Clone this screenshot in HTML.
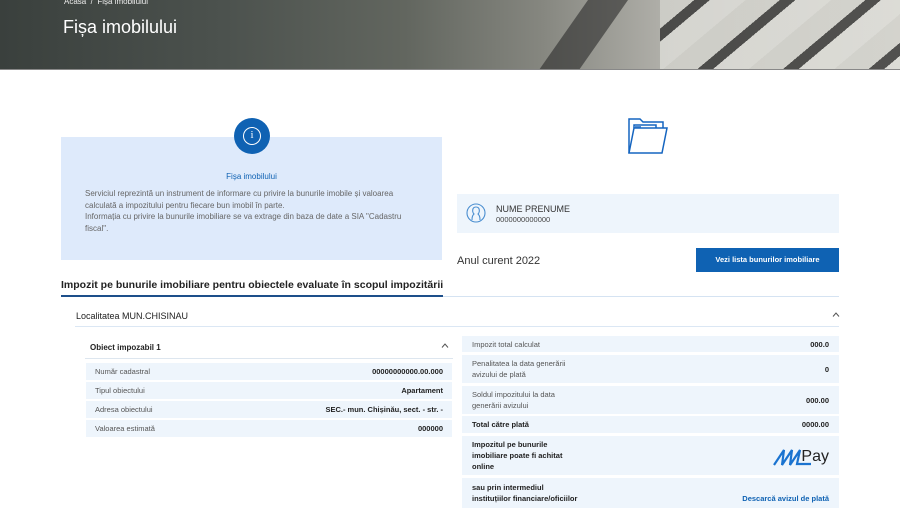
<!DOCTYPE html>
<html><head><meta charset="utf-8"><style>
*{margin:0;padding:0;box-sizing:border-box}
body{width:900px;height:505px;overflow:hidden;background:#fff;font-family:"Liberation Sans",sans-serif;position:relative;color:#222}
.a{position:absolute}
.hero{left:0;top:0;width:900px;height:70px;background:linear-gradient(90deg,#3a403d 0%,#4c524e 25%,#62665f 45%,#85867f 60%,#b4b3ad 75%,#c9c8c2 100%);overflow:hidden;border-bottom:1px solid #888}
.row{position:absolute;background:#eef5fc;font-size:7.5px;color:#555;display:flex;align-items:center;justify-content:space-between;padding:0 6px}
.row b{color:#222}
</style></head><body>
<div class="a hero">
 <div class="a" style="left:560px;top:-20px;width:40px;height:120px;background:#2a2a2a;transform:skewX(-35deg);opacity:.6"></div>
 <div class="a" style="left:660px;top:0;width:240px;height:70px;background:repeating-linear-gradient(140deg,#d8d8d2 0 22px,#1e1e1e 22px 32px,#e4e4df 32px 55px);opacity:.7"></div>
 <div class="a" style="left:64px;top:-3px;color:#eee;font-size:8px">Acasă &nbsp;/&nbsp; Fișa imobilului</div>
 <div class="a" style="left:63px;top:17px;color:#fff;font-size:18px">Fișa imobilului</div>
</div>
<div class="a" style="left:61px;top:137px;width:381px;height:123px;background:#deeafb"></div>
<div class="a" style="left:234px;top:118px;width:36px;height:36px;border-radius:50%;background:#0f62b3"></div>
<div class="a" style="left:243px;top:127px;width:18px;height:18px;border-radius:50%;border:1.3px solid #fff;color:#fff;font-size:11px;text-align:center;line-height:15px;font-family:'Liberation Serif',serif">i</div>
<div class="a" style="left:61px;top:172px;width:381px;text-align:center;font-size:8px;color:#0f62b3">Fișa imobilului</div>
<div class="a" style="left:85px;top:188px;width:340px;font-size:8px;line-height:11.5px;color:#666">Serviciul reprezintă un instrument de informare cu privire la bunurile imobile și valoarea calculată a impozitului pentru fiecare bun imobil în parte.<br>Informația cu privire la bunurile imobiliare se va extrage din baza de date a SIA "Cadastru fiscal".</div>
<svg class="a" style="left:628px;top:118px" width="40" height="36" viewBox="0 0 40 36" fill="none" stroke="#1565c0" stroke-width="1.5"><path d="M1 35V1h11l3 3h20v6"/><path d="M6 10V7h22v3M8 8v2M10 8v2M12 8v2"/><path d="M1 35l5-25h33l-5 25z"/></svg>
<div class="a" style="left:457px;top:194px;width:382px;height:39px;background:#eef5fc"></div>
<svg class="a" style="left:466px;top:203px" width="20" height="20" viewBox="0 0 20 20" fill="none" stroke="#4a8ed0" stroke-width="1.1"><circle cx="10" cy="10" r="9"/><path d="M6 17c0-4 1-5 2-6-2-2-2-7 2-7s4 5 2 7c1 1 2 2 2 6"/></svg>
<div class="a" style="left:496px;top:204px;font-size:9px;color:#333">NUME PRENUME</div>
<div class="a" style="left:496px;top:215px;font-size:7.5px;color:#444">0000000000000</div>
<div class="a" style="left:457px;top:255px;font-size:11px;color:#333">Anul curent 2022</div>
<div class="a" style="left:696px;top:248px;width:143px;height:24px;background:#0f62b3;color:#fff;font-size:7.5px;text-align:center;line-height:24px;font-weight:bold">Vezi lista bunurilor imobiliare</div>
<div class="a" style="left:61px;top:279px;font-size:10.5px;font-weight:bold;color:#222">Impozit pe bunurile imobiliare pentru obiectele evaluate în scopul impozitării</div>
<div class="a" style="left:61px;top:296px;width:778px;height:1px;background:#d5e3f2"></div>
<div class="a" style="left:61px;top:295px;width:382px;height:2px;background:#1d4f8a"></div>
<div class="a" style="left:76px;top:311px;font-size:9px;color:#222">Localitatea MUN.CHISINAU</div>
<svg class="a" style="left:832px;top:312px" width="8" height="5" viewBox="0 0 8 5" fill="none" stroke="#555"><path d="M1 4.5L4 1l3 3.5"/></svg>
<div class="a" style="left:75px;top:326px;width:764px;height:1px;background:#dbe7f4"></div>
<div class="a" style="left:90px;top:343px;font-size:8px;font-weight:bold">Obiect impozabil 1</div>
<svg class="a" style="left:441px;top:343px" width="8" height="5" viewBox="0 0 8 5" fill="none" stroke="#555"><path d="M1 4.5L4 1l3 3.5"/></svg>
<div class="a" style="left:85px;top:358px;width:368px;height:1px;background:#dde6ef"></div>
<div class="row" style="left:86px;top:363px;width:366px;height:17px;padding:0 9px">Număr cadastral<b>00000000000.00.000</b></div>
<div class="row" style="left:86px;top:382px;width:366px;height:17px;padding:0 9px">Tipul obiectului<b>Apartament</b></div>
<div class="row" style="left:86px;top:401px;width:366px;height:17px;padding:0 9px">Adresa obiectului<b>SEC.- mun. Chișinău, sect. - str. -</b></div>
<div class="row" style="left:86px;top:420px;width:366px;height:17px;padding:0 9px">Valoarea estimată<b>000000</b></div>
<div class="row" style="left:462px;top:336px;width:377px;height:16px;padding:0 10px">Impozit total calculat<b>000.0</b></div>
<div class="row" style="left:462px;top:355px;width:377px;height:28px;padding:0 10px;line-height:11px"><span>Penalitatea la data generării<br>avizului de plată</span><b>0</b></div>
<div class="row" style="left:462px;top:386px;width:377px;height:28px;padding:0 10px;line-height:11px"><span>Soldul impozitului la data<br>generării avizului</span><b>000.00</b></div>
<div class="row" style="left:462px;top:416px;width:377px;height:17px;padding:0 10px"><b>Total către plată</b><b>0000.00</b></div>
<div class="row" style="left:462px;top:436px;width:377px;height:39px;padding:0 10px;line-height:11px"><b>Impozitul pe bunurile<br>imobiliare poate fi achitat<br>online</b>
<span style="display:flex;align-items:flex-end"><svg width="40" height="20" viewBox="0 0 40 20" fill="none" stroke="#1a73d0" stroke-width="2.2"><path d="M1 19L11 4l-2 15L19 4l-2 15L27 4l-3 14h14"/></svg><span style="font-size:16px;color:#222;margin-left:-12px;margin-bottom:4px">Pay</span></span></div>
<div class="row" style="left:462px;top:478px;width:377px;height:30px;padding:0 10px;line-height:11px;align-items:flex-start;padding-top:4px"><b>sau prin intermediul<br>instituțiilor financiare/oficiilor</b><b style="color:#0f62b3;margin-top:11px">Descarcă avizul de plată</b></div>
</body></html>
